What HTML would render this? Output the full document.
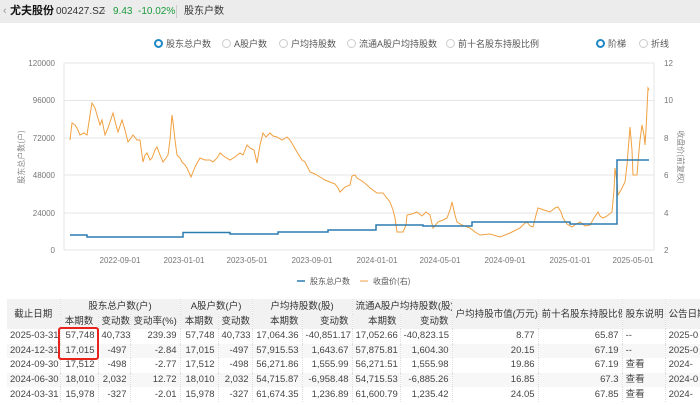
<!DOCTYPE html>
<html><head><meta charset="utf-8"><style>
*{margin:0;padding:0;box-sizing:border-box}
body{width:700px;height:405px;overflow:hidden;background:#fff;font-family:"Liberation Sans","Noto Sans CJK SC",sans-serif;color:#333;position:relative}
.top{position:absolute;left:0;top:0;width:700px;height:23px;background:#ececec;font-size:11px;line-height:23px;white-space:nowrap}
.top span{position:absolute}
.t{position:absolute;font-size:9px;color:#555;white-space:nowrap}
.rad{position:absolute;top:39px;width:9px;height:9px;border-radius:50%;border:1px solid #ccc}
.rad.on{border:2.5px solid #1e88c7}
.wrap{position:absolute;left:7px;top:299px;width:693px;height:106px;overflow:hidden}
table{table-layout:fixed;width:693px;border-collapse:collapse;font-size:9.5px;color:#444}
td{height:14.6px;line-height:14px;padding:0 3px;text-align:right;white-space:nowrap;overflow:hidden;border-left:1px dotted #ddd}
thead td{background:#f2f2f2;text-align:center;height:15px;line-height:15px;color:#333}
tbody tr:nth-child(even) td{background:#f7f7f7}
</style></head><body>
<div class="top">
<span style="left:3px;color:#999">‹</span>
<span style="left:10px;font-weight:bold;color:#111">尤夫股份</span>
<span style="left:56px;font-size:10px;color:#333">002427.SZ</span>
<span style="left:102px;color:#999">›</span>
<span style="left:113px;color:#1a9b3c;font-size:10px">9.43</span>
<span style="left:138px;color:#1a9b3c;font-size:10px">-10.02%</span>
<span style="left:176px;top:5px;height:13px;border-left:1px solid #ccc"></span>
<span style="left:184px;font-size:10px;color:#333">股东户数</span>
</div>
<div class="rad on" style="left:154px"></div><div class="t" style="left:166px;top:37px">股东总户数</div>
<div class="rad" style="left:222px"></div><div class="t" style="left:234px;top:37px">A股户数</div>
<div class="rad" style="left:279px"></div><div class="t" style="left:291px;top:37px">户均持股数</div>
<div class="rad" style="left:347px"></div><div class="t" style="left:359px;top:37px">流通A股户均持股数</div>
<div class="rad" style="left:446px"></div><div class="t" style="left:458px;top:37px">前十名股东持股比例</div>
<div class="rad on" style="left:596px"></div><div class="t" style="left:608px;top:37px">阶梯</div>
<div class="rad" style="left:639px"></div><div class="t" style="left:651px;top:37px">折线</div>
<svg style="position:absolute;left:0;top:0" width="700" height="295">
<g stroke="#e6e6e6" stroke-width="1">
<line x1="64" x2="654" y1="63" y2="63"/><line x1="64" x2="654" y1="100.5" y2="100.5"/><line x1="64" x2="654" y1="138" y2="138"/><line x1="64" x2="654" y1="175" y2="175"/><line x1="64" x2="654" y1="213" y2="213"/><line x1="64" x2="654" y1="250" y2="250"/>
<line x1="64" x2="64" y1="63" y2="250"/><line x1="654" x2="654" y1="63" y2="250"/>
</g>
<g font-size="8" fill="#777" font-family="Liberation Sans,sans-serif" text-anchor="end">
<text x="55" y="66">120000</text><text x="55" y="103">96000</text><text x="55" y="141">72000</text><text x="55" y="178">48000</text><text x="55" y="216">24000</text><text x="55" y="253">0</text>
</g>
<g font-size="8" fill="#777" font-family="Liberation Sans,sans-serif">
<text x="664" y="66">12</text><text x="664" y="103">10</text><text x="664" y="141">8</text><text x="664" y="178">6</text><text x="664" y="216">4</text><text x="664" y="253">2</text>
</g>
<g font-size="8" fill="#777" font-family="Liberation Sans,sans-serif" text-anchor="middle">
<text x="120" y="263">2022-09-01</text><text x="184" y="263">2023-01-01</text><text x="247" y="263">2023-05-01</text><text x="312" y="263">2023-09-01</text><text x="377" y="263">2024-01-01</text><text x="440" y="263">2024-05-01</text><text x="505" y="263">2024-09-01</text><text x="570" y="263">2025-01-01</text><text x="633" y="263">2025-05-01</text>
</g>
<text transform="translate(24,157) rotate(-90)" font-size="8" fill="#888" text-anchor="middle" font-family="Noto Sans CJK SC,sans-serif">股东总户数(户)</text>
<text transform="translate(678,157) rotate(90)" font-size="8" fill="#888" text-anchor="middle" font-family="Noto Sans CJK SC,sans-serif">收盘价(前复权)</text>
<polyline fill="none" stroke="#f0a040" stroke-width="1" points="70,140 72,123 75,125 77,128 80,135 84,133 87,135 90,115 92,103 95,108 97,115 100,125 102,120 105,135 108,128 113,113 116,125 118,132 122,120 125,130 128,142 131,138 133,135 137,140 140,140 143,162 145,155 147,153 150,160 152,158 155,150 157,147 160,155 163,162 166,158 168,155 170,140 172,115 173,122 175,140 177,155 180,158 182,162 185,165 187,168 191,177 193,172 195,167 200,158 205,160 210,160 213,162 217,158 220,153 225,157 230,160 235,157 240,153 243,155 247,145 250,148 254,150 257,163 260,145 263,133 266,137 270,133 273,136 277,137 282,140 287,137 290,140 293,145 297,152 302,160 305,162 310,172 315,174 320,177 325,180 330,182 335,184 338,188 340,192 345,187 350,185 352,176 355,175 357,178 362,181 367,185 370,188 377,193 383,193 386,197 390,202 393,210 395,218 397,232 403,232 406,225 407,215 412,214 417,212 422,216 426,212 430,215 433,228 438,222 443,220 447,218 450,210 452,202 455,215 457,222 462,225 470,228 475,232 480,235 490,234 500,237 510,233 520,228 524,224 527,222 530,226 533,227 536,215 538,208 544,210 550,212 555,208 558,207 561,212 563,218 567,224 572,227 576,224 580,222 585,226 590,225 594,218 598,212 600,216 603,218 607,216 612,212 614,190 615,168 617,182 618,195 621,190 625,182 627,165 628,152 630,127 632,150 633,175 637,175 638,162 640,140 642,125 644,135 645,145 646,130 648,88 649,90"/>
<polyline fill="none" stroke="#2b7bb0" stroke-width="1.5" points="70,235 87,235 87,237 183,237 183,232.5 230,232.5 230,234 278,234 278,232 328,232 328,230 376,230 376,225 423,225 423,226 472,226 472,222 570,222 570,224 617,224 617,160 649,160"/>
<line x1="297" x2="305" y1="281" y2="281" stroke="#2b7bb0" stroke-width="1.5"/>
<text x="310" y="284" font-size="8" fill="#555" font-family="Noto Sans CJK SC,sans-serif">股东总户数</text>
<line x1="360" x2="368" y1="281" y2="281" stroke="#f0a040" stroke-width="1"/>
<text x="373" y="284" font-size="8" fill="#555" font-family="Noto Sans CJK SC,sans-serif">收盘价(右)</text>
</svg>
<div class="wrap">
<table>
<colgroup><col style="width:53px"><col style="width:38px"><col style="width:32px"><col style="width:50px"><col style="width:38px"><col style="width:34px"><col style="width:50px"><col style="width:50px"><col style="width:48px"><col style="width:52px"><col style="width:86px"><col style="width:84px"><col style="width:43px"><col style="width:35px"></colgroup>
<thead>
<tr><td rowspan="2" style="border-left:none">截止日期</td><td colspan="3">股东总户数(户)</td><td colspan="2">A股户数(户)</td><td colspan="2">户均持股数(股)</td><td colspan="2">流通A股户均持股数(股)</td><td rowspan="2">户均持股市值(万元)</td><td rowspan="2">前十名股东持股比例</td><td rowspan="2">股东说明</td><td rowspan="2" style="text-align:left">公告日期</td></tr>
<tr><td>本期数</td><td>变动数</td><td>变动率(%)</td><td>本期数</td><td>变动数</td><td style="text-align:right">本期数</td><td style="text-align:right">变动数</td><td style="text-align:right">本期数</td><td style="text-align:right">变动数</td></tr>
</thead>
<tbody>
<tr><td style="border-left:none">2025-03-31</td><td>57,748</td><td>40,733</td><td>239.39</td><td>57,748</td><td>40,733</td><td>17,064.36</td><td>-40,851.17</td><td>17,052.66</td><td>-40,823.15</td><td>8.77</td><td>65.87</td><td style="text-align:left">--</td><td style="text-align:left">2025-0</td></tr>
<tr><td style="border-left:none">2024-12-31</td><td>17,015</td><td>-497</td><td>-2.84</td><td>17,015</td><td>-497</td><td>57,915.53</td><td>1,643.67</td><td>57,875.81</td><td>1,604.30</td><td>20.15</td><td>67.19</td><td style="text-align:left">--</td><td style="text-align:left">2025-0</td></tr>
<tr><td style="border-left:none">2024-09-30</td><td>17,512</td><td>-498</td><td>-2.77</td><td>17,512</td><td>-498</td><td>56,271.86</td><td>1,555.99</td><td>56,271.51</td><td>1,555.98</td><td>19.86</td><td>67.19</td><td style="text-align:left">查看</td><td style="text-align:left">2024-</td></tr>
<tr><td style="border-left:none">2024-06-30</td><td>18,010</td><td>2,032</td><td>12.72</td><td>18,010</td><td>2,032</td><td>54,715.87</td><td>-6,958.48</td><td>54,715.53</td><td>-6,885.26</td><td>16.85</td><td>67.3</td><td style="text-align:left">查看</td><td style="text-align:left">2024-0</td></tr>
<tr><td style="border-left:none">2024-03-31</td><td>15,978</td><td>-327</td><td>-2.01</td><td>15,978</td><td>-327</td><td>61,674.35</td><td>1,236.89</td><td>61,600.79</td><td>1,235.42</td><td>24.05</td><td>67.85</td><td style="text-align:left">查看</td><td style="text-align:left">2024-</td></tr>
</tbody>
</table>
</div>
<div style="position:absolute;left:58px;top:327px;width:41px;height:33px;border:2.5px solid #e8231c;border-radius:3px"></div>
</body></html>
